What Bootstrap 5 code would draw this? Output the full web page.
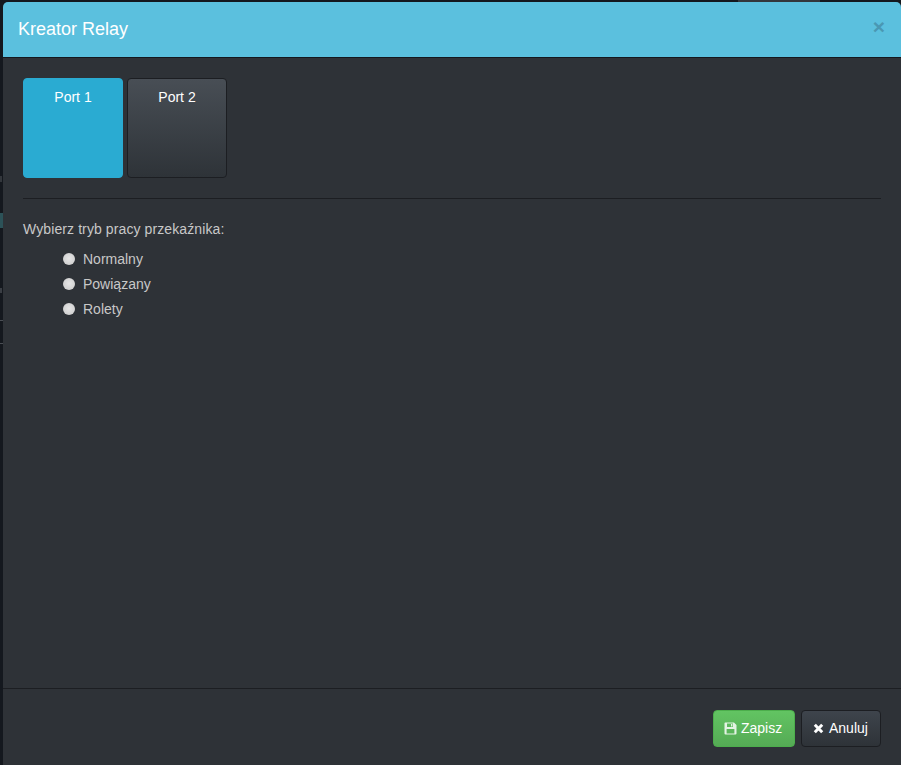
<!DOCTYPE html>
<html lang="pl">
<head>
<meta charset="utf-8">
<title>Kreator Relay</title>
<link href="https://cdn.jsdelivr.net/npm/bootstrap@5.3.0/dist/css/bootstrap.min.css" rel="stylesheet">
<style>
html, body { height: 765px; overflow: hidden; }
body { background: #14181e; font-family: "Liberation Sans", Arial, sans-serif; font-size: 14px; color: #c8c8c8; }
.dlg { height: 763px; margin: 2px 0 0 3px; background: #2e3237; border-radius: 5px 5px 0 0; }
.dlg-head { height: 56px; flex: none; background: #5bc0de; border-bottom: 1px solid #14181e; border-radius: 5px 5px 0 0; padding: 0 15px; }
.dlg-title { font-size: 18px; line-height: 1.1; color: #fff; margin: 0; }
.dlg-x { font-size: 21px; line-height: 1; font-weight: 700; color: #4a98b3; background: none; border: 0; padding: 0 0 6px; margin-right: 1px; }
.dlg-body { padding: 20px; height: 630px; flex: none; }
.tiles { gap: 4px; }
.tile { width: 100px; height: 100px; border-radius: 4px; border: 1px solid #1c1e22; color: #fff; text-align: center; padding: 8px 0 0; line-height: 20px; background: linear-gradient(#484e55, #2e3338); }
.tile-on { border-color: #2aabd2; background: #2aabd2; }
.rule { border-top: 1px solid #1c1e22; margin: 20px 0; }
.prompt { line-height: 20px; margin-bottom: 8px; letter-spacing: .1px; }
.opts { padding-left: 40px; }
.opt { height: 25px; gap: 8px; }
.dot { width: 12px; height: 12px; border-radius: 50%; background: radial-gradient(circle at 50% 45%, #e6e6e6, #d0d0d0 75%, #b4b4b4); flex: none; margin: -1px 0 0; appearance: none; -webkit-appearance: none; }
.dlg-foot { height: 77px; flex: none; border-top: 1px solid #1c1e22; padding: 2px 20px 0 0; gap: 6px; }
.act { height: 37px; border-radius: 4px; font-size: 14px; color: #fff; }
.act-save { width: 82px; padding: 0 0 0 10px; gap: 4px; background: linear-gradient(#62c462, #51a351 130%); border: 1px solid #4cae4c; }
.act-cancel { width: 80px; padding: 0 0 0 11px; gap: 5px; background: linear-gradient(#3e444c, #2e3338); border: 1px solid #1c1e22; }
.scrap { position: absolute; display: block; }
.scrap-teal { left: 0; top: 213px; width: 3px; height: 15px; background: #2c5258; }
.scrap-a { left: 0; top: 320px; width: 3px; height: 1px; background: #4a4e54; }
.scrap-b { left: 0; top: 343px; width: 3px; height: 1px; background: #4a4e54; }
.scrap-c { left: 0; top: 176px; width: 2px; height: 6px; background: #33373c; }
.scrap-d { left: 0; top: 288px; width: 2px; height: 5px; background: #3a3e44; }
.scrap-top { left: 738px; top: 0; width: 82px; height: 2px; background: #33373c; }
</style>
</head>
<body>
<span class="scrap scrap-teal"></span><span class="scrap scrap-a"></span><span class="scrap scrap-b"></span><span class="scrap scrap-c"></span><span class="scrap scrap-d"></span><span class="scrap scrap-top"></span>
<div class="dlg d-flex flex-column">
  <header class="dlg-head d-flex align-items-center justify-content-between">
    <h4 class="dlg-title">Kreator Relay</h4>
    <button type="button" class="dlg-x">×</button>
  </header>
  <main class="dlg-body">
    <div class="tiles d-flex">
      <div class="tile tile-on">Port 1</div>
      <div class="tile">Port 2</div>
    </div>
    <div class="rule"></div>
    <div class="prompt">Wybierz tryb pracy przekaźnika:</div>
    <div class="opts">
      <label class="opt d-flex align-items-center"><input class="dot" type="radio" name="m"><span>Normalny</span></label>
      <label class="opt d-flex align-items-center"><input class="dot" type="radio" name="m"><span>Powiązany</span></label>
      <label class="opt d-flex align-items-center"><input class="dot" type="radio" name="m"><span>Rolety</span></label>
    </div>
  </main>
  <footer class="dlg-foot d-flex align-items-center justify-content-end">
    <button type="button" class="act act-save d-inline-flex align-items-center">
      <svg width="13" height="13" viewBox="0 0 13 13" aria-hidden="true"><path fill="#e4f3e4" fill-rule="evenodd" d="M1.2 0.5H10L12.5 3V11.5A1 1 0 0 1 11.5 12.5H1.5A1 1 0 0 1 .5 11.5V1.2A.7.7 0 0 1 1.2.5ZM3 1.6V5H9V1.6ZM7 2H8.4V4.5H7ZM2.6 7V11.4H10.4V7Z"/></svg>
      <span>Zapisz</span>
    </button>
    <button type="button" class="act act-cancel d-inline-flex align-items-center">
      <svg width="11" height="11" viewBox="0 0 11 11" aria-hidden="true"><path fill="none" stroke="#fff" stroke-width="3" d="M1.8 1.8L9.2 9.2M9.2 1.8L1.8 9.2"/></svg>
      <span>Anuluj</span>
    </button>
  </footer>
</div>
</body>
</html>
